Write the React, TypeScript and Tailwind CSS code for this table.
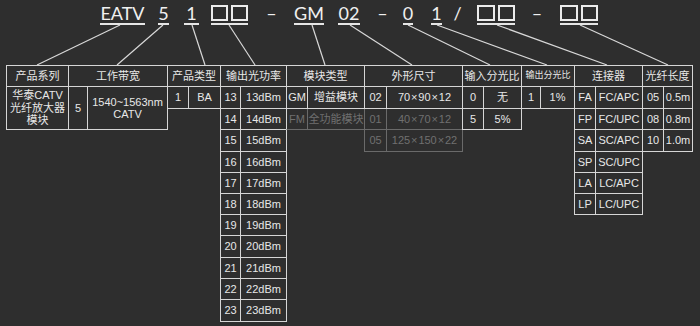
import type { ReactNode } from "react";

// row heights below the header, alternating so the rows land on whole pixels
const H = [
  "h-[22px]",
  "h-[21px]",
  "h-[22px]",
  "h-[21px]",
  "h-[21px]",
  "h-[21px]",
  "h-[21px]",
  "h-[22px]",
  "h-[21px]",
  "h-[21px]",
  "h-[22px]",
];

const LINE = "border-[#d6d6d6]";
const DIM = "border-[#6a6a6a]";

type Row = {
  cells: ReactNode[];
  h: string;
  dim?: boolean;
  edge?: "dim" | "bright";
};

type Group = {
  title: string;
  titleClass?: string;
  width: string;
  cols: string[];
  rows: Row[];
};

const x = "\u200a×\u200a";

const groups: Group[] = [
  {
    title: "产品系列",
    width: "w-[62px]",
    cols: ["w-[62px]"],
    rows: [
      {
        cells: [
          <span className="whitespace-pre-line leading-[12.5px]">
            {"华泰CATV\n光纤放大器\n模块"}
          </span>,
        ],
        h: "h-[43px]",
      },
    ],
  },
  {
    title: "工作带宽",
    width: "w-[99px]",
    cols: ["w-[19px]", "w-[80px]"],
    rows: [
      {
        cells: [
          "5",
          <span className="whitespace-pre-line leading-[12px]">
            {"1540~1563nm\nCATV"}
          </span>,
        ],
        h: "h-[43px]",
      },
    ],
  },
  {
    title: "产品类型",
    width: "w-[53px]",
    cols: ["w-[21px]", "w-[32px]"],
    rows: [{ cells: ["1", "BA"], h: H[0] }],
  },
  {
    title: "输出光功率",
    width: "w-[66px]",
    cols: ["w-[20px]", "w-[46px]"],
    rows: Array.from({ length: 11 }, (_, i) => ({
      cells: [String(13 + i), `${13 + i}dBm`],
      h: H[i],
    })),
  },
  {
    title: "模块类型",
    width: "w-[78px]",
    cols: ["w-[21px]", "w-[57px]"],
    rows: [
      { cells: ["GM", "增益模块"], h: H[0] },
      { cells: ["FM", "全功能模块"], h: H[1], dim: true, edge: "bright" },
    ],
  },
  {
    title: "外形尺寸",
    width: "w-[98px]",
    cols: ["w-[22px]", "w-[76px]"],
    rows: [
      { cells: ["02", `70${x}90${x}12`], h: H[0] },
      { cells: ["01", `40${x}70${x}12`], h: H[1], dim: true, edge: "dim" },
      { cells: ["05", `125${x}150${x}22`], h: H[2], dim: true, edge: "dim" },
    ],
  },
  {
    title: "输入分光比",
    width: "w-[59px]",
    cols: ["w-[21px]", "w-[38px]"],
    rows: [
      { cells: ["0", "无"], h: H[0] },
      { cells: ["5", "5%"], h: H[1] },
    ],
  },
  {
    title: "输出分光比",
    titleClass: "text-[9px]",
    width: "w-[53px]",
    cols: ["w-[19px]", "w-[34px]"],
    rows: [{ cells: ["1", "1%"], h: H[0] }],
  },
  {
    title: "连接器",
    width: "w-[68px]",
    cols: ["w-[21px]", "w-[47px]"],
    rows: [
      ["FA", "FC/APC"],
      ["FP", "FC/UPC"],
      ["SA", "SC/APC"],
      ["SP", "SC/UPC"],
      ["LA", "LC/APC"],
      ["LP", "LC/UPC"],
    ].map((cells, i) => ({ cells, h: H[i] })),
  },
  {
    title: "光纤长度",
    width: "w-[50px]",
    cols: ["w-[21px]", "w-[29px]"],
    rows: [
      ["05", "0.5m"],
      ["08", "0.8m"],
      ["10", "1.0m"],
    ].map((cells, i) => ({ cells, h: H[i] })),
  },
];

// code segments above the table: label, left margin, width
type Seg = { label: string; ml: string; w: string; mark?: boolean; boxes?: boolean };

const segs: Seg[] = [
  { label: "EATV", ml: "ml-[100px]", w: "w-[45px]", mark: true },
  { label: "5", ml: "ml-[13px]", w: "w-[11px]", mark: true },
  { label: "1", ml: "ml-[15px]", w: "w-[15px]", mark: true },
  { label: "", ml: "ml-[12px]", w: "w-[37px]", mark: true, boxes: true },
  { label: "–", ml: "ml-[19px]", w: "w-[9px]" },
  { label: "GM", ml: "ml-[18px]", w: "w-[30px]", mark: true },
  { label: "02", ml: "ml-[14px]", w: "w-[22px]", mark: true },
  { label: "–", ml: "ml-[18px]", w: "w-[9px]" },
  { label: "0", ml: "ml-[16px]", w: "w-[10px]", mark: true },
  { label: "1", ml: "ml-[18px]", w: "w-[11px]", mark: true },
  { label: "/", ml: "ml-[13px]", w: "w-[5px]" },
  { label: "", ml: "ml-[17px]", w: "w-[38px]", mark: true, boxes: true },
  { label: "–", ml: "ml-[17px]", w: "w-[10px]" },
  { label: "", ml: "ml-[18px]", w: "w-[38px]", mark: true, boxes: true },
];

// leader lines from each code segment down to its column header
const leaders: [number, number, number, number][] = [
  [120, 25, 37, 65],
  [163, 25, 117, 65],
  [192, 25, 205, 65],
  [229, 25, 255, 65],
  [312, 25, 325, 65],
  [350, 25, 412, 65],
  [408, 25, 490, 65],
  [437, 25, 547, 65],
  [497, 25, 607, 65],
  [580, 25, 668, 65],
];

function CodeLine() {
  return (
    <div className="flex h-[25px] font-['Lato',sans-serif] text-[18px] leading-[20px] text-[#f0f0f0]">
      {segs.map((s, i) => (
        <div
          key={i}
          className={`${s.ml} ${s.w} flex justify-center whitespace-nowrap ${
            s.mark ? "h-[25px] border-b-2 border-[#e6e6e6]" : ""
          } ${s.boxes ? "gap-[3px]" : "pt-[3px]"}`}
        >
          {s.boxes ? (
            <>
              <span className="mt-[5px] h-[16px] flex-1 border-2 border-[#ececec]" />
              <span className="mt-[5px] h-[16px] flex-1 border-2 border-[#ececec]" />
            </>
          ) : (
            s.label
          )}
        </div>
      ))}
    </div>
  );
}

function Column({ g, first }: { g: Group; first: boolean }) {
  return (
    <div className={`flex flex-col ${first ? "" : "-ml-px"}`}>
      <div className={`flex h-[22px] border-y border-l ${LINE}`}>
        <div
          className={`${g.width} flex items-center justify-center border-r ${LINE} ${
            g.titleClass ?? ""
          }`}
        >
          {g.title}
        </div>
      </div>
      {g.rows.map((r, i) => (
        <div
          key={i}
          className={`flex ${r.h} border-b border-l ${r.dim ? DIM : LINE} ${
            r.edge === "bright" ? "border-l-[#d6d6d6]" : ""
          } ${r.dim ? "text-[#707070]" : ""}`}
        >
          {r.cells.map((c, j) => (
            <div
              key={j}
              className={`${g.cols[j]} flex items-center justify-center whitespace-nowrap text-center border-r ${
                r.dim ? DIM : LINE
              }`}
            >
              {c}
            </div>
          ))}
        </div>
      ))}
    </div>
  );
}

export default function App() {
  return (
    <div className="min-h-screen bg-[#2e2e2e]">
      <div className="relative h-[326px] w-[700px] pt-px">
        <svg
          className="pointer-events-none absolute left-0 top-0"
          width={700}
          height={66}
          viewBox="0 0 700 66"
        >
          {leaders.map(([x1, y1, x2, y2], i) => (
            <line
              key={i}
              x1={x1}
              y1={y1}
              x2={x2}
              y2={y2}
              stroke="#d8d8d8"
              strokeWidth={1.2}
            />
          ))}
        </svg>
        <div className="-mt-px">
          <CodeLine />
        </div>
        <div className="mt-[40px] flex items-start pl-[6px] font-['Liberation_Sans','Noto_Sans_CJK_SC',sans-serif] text-[11px] text-[#e8e8e8]">
          {groups.map((g, i) => (
            <Column key={g.title} g={g} first={i === 0} />
          ))}
        </div>
      </div>
    </div>
  );
}
